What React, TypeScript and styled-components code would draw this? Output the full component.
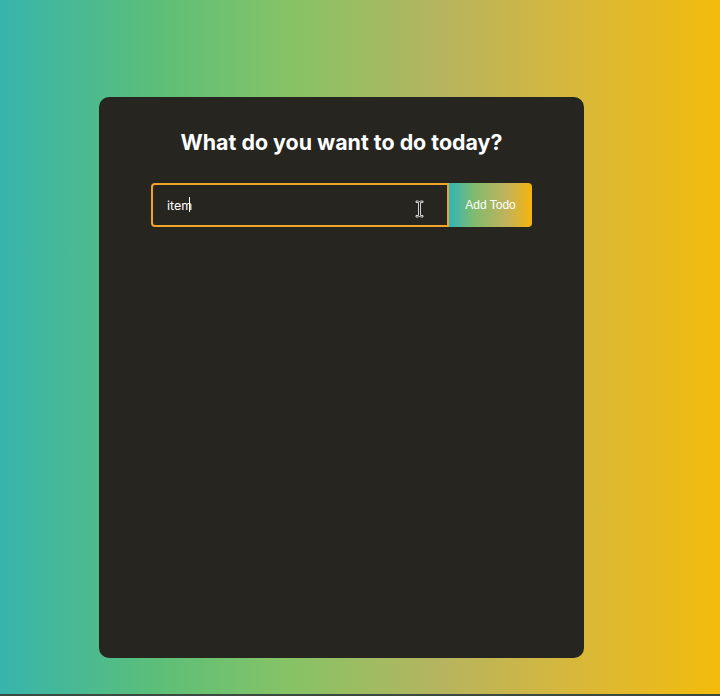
import React, { useState } from "react";
import styled, { createGlobalStyle } from "styled-components";

const GlobalStyle = createGlobalStyle`
  html, body {
    margin: 0;
    padding: 0;
  }
  body {
    font-family: Inter, "Liberation Sans", Arial, sans-serif;
    background: linear-gradient(90deg, #38b4ae 0%, #5cbf78 22%, #86c366 40%, #b7b45e 62%, #d8b83a 80%, #f3bb0c 100%);
    min-height: 696px;
  }
`;

const App: React.FC = () => {
    const [value, setValue] = useState("item");

    return (
        <>
            <GlobalStyle />
            <Page>
                <Card>
                    <Title>What do you want to do today?</Title>
                    <TodoForm onSubmit={(e) => e.preventDefault()}>
                        <InputWrap>
                            <TodoInput value={value} onChange={(e) => setValue(e.target.value)} />
                            <Caret style={{ left: 16 + value.length * 5.6 }} />
                            <Cursor width="9" height="18" viewBox="0 0 9 18">
                                <path
                                    d="M1 1h2.5l1 1 1-1H8v1.5H5.5v13H8V17H5.5l-1-1-1 1H1v-1.5h2.5v-13H1z"
                                    fill="#1d1d1a"
                                    stroke="#e8e8e8"
                                    strokeWidth="0.9"
                                    strokeLinejoin="round"
                                />
                            </Cursor>
                        </InputWrap>
                        <AddButton type="submit">Add Todo</AddButton>
                    </TodoForm>
                </Card>
            </Page>
            <BottomLine />
        </>
    );
};

const Page = styled.div`
  height: 694px;
  box-sizing: border-box;
  padding: 97px 0 0 99px;
`;

const Card = styled.div`
  width: 485px;
  height: 561px;
  box-sizing: border-box;
  background: #262520;
  border-radius: 10px;
  padding: 31px 0 0 52px;
  display: flex;
  flex-direction: column;
`;

const Title = styled.h1`
  margin: 0 0 27px 0;
  width: 381px;
  text-align: center;
  color: #ffffff;
  font-size: 21.4px;
  font-weight: 700;
  line-height: 28px;
  letter-spacing: 0;
`;

const TodoForm = styled.form`
  display: flex;
  width: 381px;
  height: 44px;
`;

const InputWrap = styled.div`
  position: relative;
  flex: 0 0 298px;
`;

const TodoInput = styled.input`
  width: 100%;
  height: 100%;
  box-sizing: border-box;
  background: transparent;
  border: 2px solid #f0a52a;
  border-radius: 4px 0 0 4px;
  padding: 0 14px;
  color: #ffffff;
  font-family: Inter, "Liberation Sans", Arial, sans-serif;
  font-size: 12.5px;
  outline: none;
`;

const Caret = styled.span`
  position: absolute;
  top: 14px;
  width: 1px;
  height: 15px;
  background: #ffffff;
`;

const Cursor = styled.svg`
  position: absolute;
  left: 264px;
  top: 17px;
`;

const AddButton = styled.button`
  flex: 1;
  border: none;
  border-radius: 0 4px 4px 0;
  background: linear-gradient(90deg, #2fb5b8 0%, #80bb6e 30%, #c2b35a 70%, #f7b40c 100%);
  color: #ffffff;
  font-family: "Liberation Sans", Arial, sans-serif;
  font-size: 12px;
  cursor: pointer;
  padding: 0;
`;

const BottomLine = styled.div`
  height: 2px;
  background: #3a4a40;
`;

export default App;
